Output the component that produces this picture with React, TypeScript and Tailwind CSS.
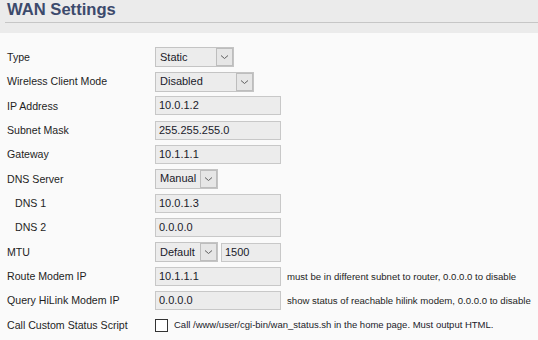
import React from "react";

const lib = { fontFamily: '"Liberation Sans", Arial, sans-serif' };

function Arrow() {
  return (
    <span className="flex h-[18px] w-[17px] shrink-0 items-center justify-center border border-[#bdbdbd] bg-[#e6e6e6]">
      <svg width="9" height="6" viewBox="0 0 9 6">
        <path d="M1 1.5 L4.5 4.5 L8 1.5" fill="none" stroke="#606060" strokeWidth="1" />
      </svg>
    </span>
  );
}

function Select({ value, w }: { value: string; w: string }) {
  return (
    <div className={`flex h-[20px] shrink-0 items-center border border-[#c4c4c4] bg-[#ececec] ${w}`}>
      <span className="flex-1 pl-[4px] text-[11px] leading-none text-[#1a1a2a]">{value}</span>
      <Arrow />
    </div>
  );
}

function Input({ value, w = "w-[126px]" }: { value: string; w?: string }) {
  return (
    <div
      className={`flex h-[19px] shrink-0 items-center border border-[#c8c8c8] bg-[#ececec] pl-[3px] text-[11px] leading-none text-[#1a1a2a] ${w}`}
    >
      {value}
    </div>
  );
}

function Row({ label, indent, children }: { label: string; indent?: boolean; children: React.ReactNode }) {
  return (
    <div className="flex h-[24.36px] items-center whitespace-nowrap">
      <div
        className={`w-[155px] shrink-0 text-[10.6px] leading-none text-[#1e1e1e] ${indent ? "pl-[15px]" : "pl-[7px]"}`}
      >
        {label}
      </div>
      {children}
    </div>
  );
}

function Hint({ children }: { children: React.ReactNode }) {
  return <span className="ml-[6px] text-[9.6px] leading-none text-[#1e1e1e]">{children}</span>;
}

export default function App() {
  return (
    <div className="h-[340px] w-[538px] overflow-hidden bg-[#fafafa]" style={lib}>
      <div className="h-[33px] bg-[#ebebeb] pl-[5px]">
        <div className="h-[23px] border-b border-[#c6c6c6] pl-[2px]">
          <span className="block text-[16.6px] font-bold leading-[19px] text-[#3c4a6c]">WAN Settings</span>
        </div>
      </div>
      <div className="pt-[12px]">
        <Row label="Type"><Select value="Static" w="w-[79px]" /></Row>
        <Row label="Wireless Client Mode"><Select value="Disabled" w="w-[99px]" /></Row>
        <Row label="IP Address"><Input value="10.0.1.2" /></Row>
        <Row label="Subnet Mask"><Input value="255.255.255.0" /></Row>
        <Row label="Gateway"><Input value="10.1.1.1" /></Row>
        <Row label="DNS Server"><Select value="Manual" w="w-[63px]" /></Row>
        <Row label="DNS 1" indent><Input value="10.0.1.3" /></Row>
        <Row label="DNS 2" indent><Input value="0.0.0.0" /></Row>
        <Row label="MTU">
          <div className="flex items-center gap-[3px]">
            <Select value="Default" w="w-[63px]" />
            <Input value="1500" w="w-[60px]" />
          </div>
        </Row>
        <Row label="Route Modem IP">
          <Input value="10.1.1.1" />
          <Hint>must be in different subnet to router, 0.0.0.0 to disable</Hint>
        </Row>
        <Row label="Query HiLink Modem IP">
          <Input value="0.0.0.0" />
          <Hint>show status of reachable hilink modem, 0.0.0.0 to disable</Hint>
        </Row>
        <Row label="Call Custom Status Script">
          <span className="h-[13px] w-[13px] shrink-0 border border-[#333] bg-white" />
          <span className="ml-[6px] text-[9.5px] leading-none text-[#1a1a2a]">
            Call /www/user/cgi-bin/wan_status.sh in the home page. Must output HTML.
          </span>
        </Row>
      </div>
    </div>
  );
}
